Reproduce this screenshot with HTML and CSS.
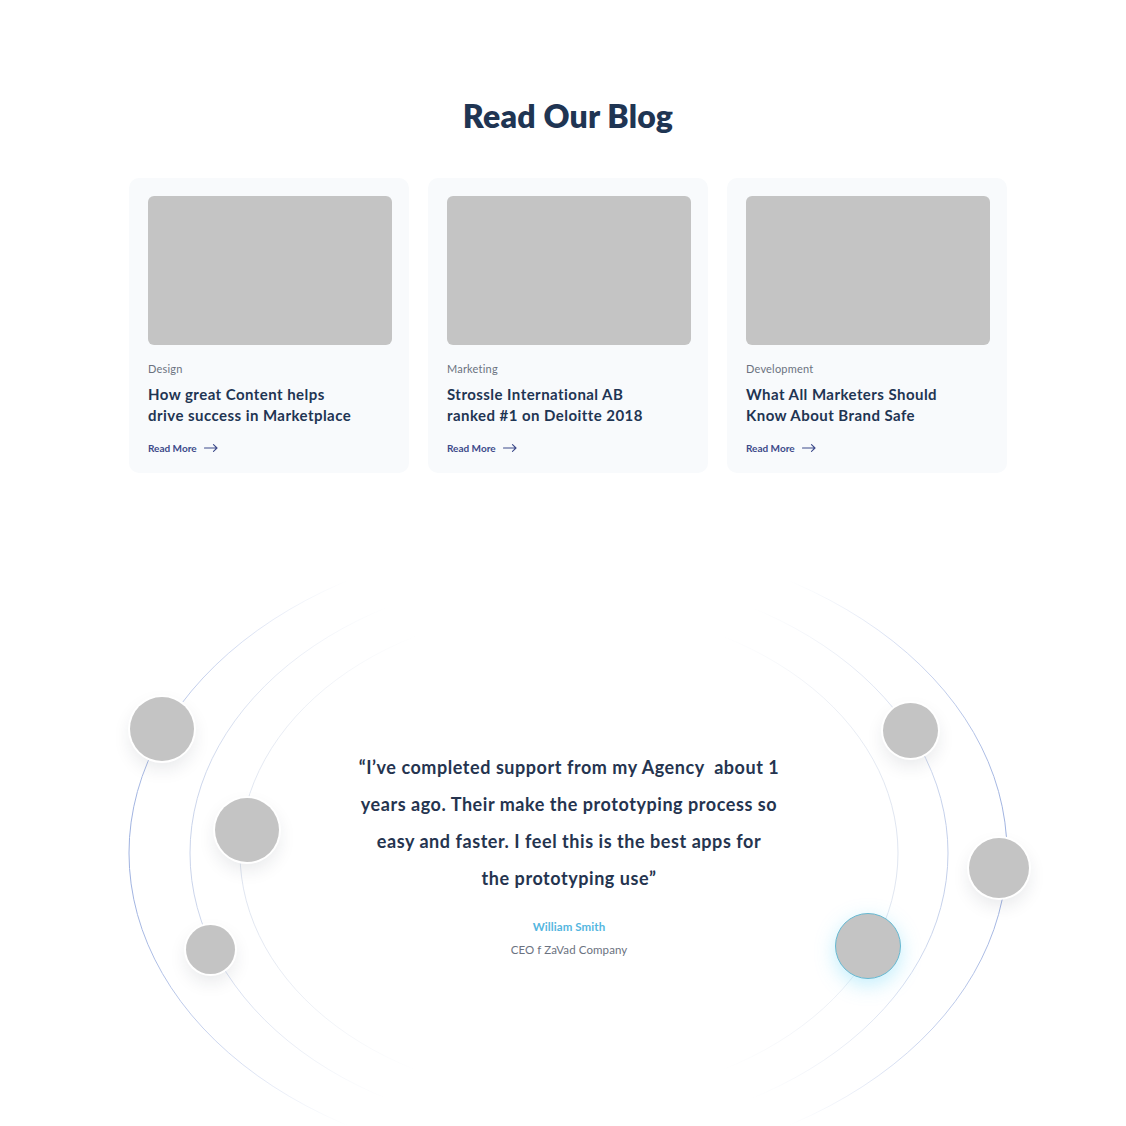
FILE: index.html
```html
<!DOCTYPE html>
<html lang="en">
<head>
<meta charset="utf-8">
<title>Read Our Blog</title>
<link rel="stylesheet" href="styles.css">
</head>
<body>
<section class="blog">
  <h2 class="blog-title">Read Our Blog</h2>
  <div class="cards">
    <article class="card">
      <div class="thumb"></div>
      <div class="cat">Design</div>
      <h3 class="card-title">How great Content helps<br>drive success in Marketplace</h3>
      <a class="more" href="#">Read More <svg class="arrow" width="14" height="8" viewBox="0 0 14 8"><path d="M0.5 4H13M9.5 0.7L13 4L9.5 7.3" fill="none" stroke="currentColor" stroke-width="1.1" stroke-linecap="round" stroke-linejoin="round"/></svg></a>
    </article>
    <article class="card">
      <div class="thumb"></div>
      <div class="cat">Marketing</div>
      <h3 class="card-title">Strossle International AB<br>ranked #1 on Deloitte 2018</h3>
      <a class="more" href="#">Read More <svg class="arrow" width="14" height="8" viewBox="0 0 14 8"><path d="M0.5 4H13M9.5 0.7L13 4L9.5 7.3" fill="none" stroke="currentColor" stroke-width="1.1" stroke-linecap="round" stroke-linejoin="round"/></svg></a>
    </article>
    <article class="card">
      <div class="thumb"></div>
      <div class="cat">Development</div>
      <h3 class="card-title">What All Marketers Should<br>Know About Brand Safe</h3>
      <a class="more" href="#">Read More <svg class="arrow" width="14" height="8" viewBox="0 0 14 8"><path d="M0.5 4H13M9.5 0.7L13 4L9.5 7.3" fill="none" stroke="currentColor" stroke-width="1.1" stroke-linecap="round" stroke-linejoin="round"/></svg></a>
    </article>
  </div>
</section>

<section class="testimonial">
  <svg class="orbits" width="1126" height="606" viewBox="0 0 1126 606">
    <defs>
      <linearGradient id="gOuter" x1="0" y1="0" x2="1" y2="0">
        <stop offset="0" stop-color="#9fb2e0" stop-opacity="1"/>
        <stop offset="0.12" stop-color="#b7c5e8" stop-opacity="0.6"/>
        <stop offset="0.25" stop-color="#d6deef" stop-opacity="0"/>
        <stop offset="0.75" stop-color="#d6deef" stop-opacity="0"/>
        <stop offset="0.88" stop-color="#b7c5e8" stop-opacity="0.6"/>
        <stop offset="1" stop-color="#9fb2e0" stop-opacity="1"/>
      </linearGradient>
      <linearGradient id="gMid" x1="0" y1="0" x2="1" y2="0">
        <stop offset="0" stop-color="#c9d3ea" stop-opacity="1"/>
        <stop offset="0.13" stop-color="#d9e0ef" stop-opacity="0.6"/>
        <stop offset="0.26" stop-color="#e6ebf4" stop-opacity="0"/>
        <stop offset="0.74" stop-color="#e6ebf4" stop-opacity="0"/>
        <stop offset="0.87" stop-color="#d9e0ef" stop-opacity="0.6"/>
        <stop offset="1" stop-color="#c3cfea" stop-opacity="1"/>
      </linearGradient>
      <linearGradient id="gInner" x1="0" y1="0" x2="1" y2="0">
        <stop offset="0" stop-color="#dfe5f0" stop-opacity="1"/>
        <stop offset="0.13" stop-color="#e6eaf2" stop-opacity="0.6"/>
        <stop offset="0.27" stop-color="#eef1f6" stop-opacity="0"/>
        <stop offset="0.73" stop-color="#eef1f6" stop-opacity="0"/>
        <stop offset="0.87" stop-color="#e6eaf2" stop-opacity="0.6"/>
        <stop offset="1" stop-color="#dfe5f0" stop-opacity="1"/>
      </linearGradient>
    </defs>
    <ellipse cx="568" cy="333" rx="439" ry="315" fill="none" stroke="url(#gOuter)" stroke-width="1"/>
    <ellipse cx="569" cy="333" rx="379" ry="280" fill="none" stroke="url(#gMid)" stroke-width="1"/>
    <ellipse cx="569" cy="333" rx="329" ry="245" fill="none" stroke="url(#gInner)" stroke-width="1"/>
  </svg>

  <div class="avatar a1"></div>
  <div class="avatar a2"></div>
  <div class="avatar a3"></div>
  <div class="avatar a4"></div>
  <div class="avatar a5"></div>
  <div class="avatar a6 active"></div>

  <div class="quote-block">
    <p class="quote">“I’ve completed support from my Agency&nbsp; about 1<br>years ago. Their make the prototyping process so<br>easy and faster. I feel this is the best apps for<br>the prototyping use”</p>
    <div class="author">William Smith</div>
    <div class="role">CEO f ZaVad Company</div>
  </div>
</section>
</body>
</html>
```

FILE: styles.css
```css
* { box-sizing: border-box; }

html, body {
  margin: 0;
  padding: 0;
  background: #ffffff;
}

body {
  font-family: "Lato", "Inter", "Liberation Sans", sans-serif;
  color: #1f3452;
  overflow: hidden;
  height: 1126px;
}

.blog {
  padding-top: 98px;
  padding-left: 10px;
  display: flex;
  flex-direction: column;
  align-items: center;
}

.blog-title {
  margin: 0;
  font-size: 32px;
  line-height: 36px;
  font-weight: 800;
  color: #1f3553;
  letter-spacing: 0.2px;
}

.cards {
  margin-top: 44px;
  display: flex;
  gap: 19px;
}

.card {
  width: 280px;
  height: 295px;
  background: #f8fafc;
  border-radius: 10px;
  padding: 18px 19px 18px 19px;
  display: flex;
  flex-direction: column;
  align-items: flex-start;
}

.thumb {
  width: 244px;
  height: 149px;
  background: #c4c4c4;
  border-radius: 6px;
}

.cat {
  margin-top: 17px;
  font-size: 11px;
  line-height: 14px;
  color: #6b7280;
  letter-spacing: 0.2px;
}

.card-title {
  margin: 8px 0 0;
  font-size: 15px;
  line-height: 21px;
  font-weight: 700;
  color: #1f3553;
  letter-spacing: 0.45px;
}

.more {
  margin-top: 15px;
  display: flex;
  align-items: center;
  gap: 7px;
  font-size: 10px;
  line-height: 14px;
  font-weight: 700;
  color: #3d4a8a;
  text-decoration: none;
}

.arrow { display: block; }

.testimonial {
  position: relative;
  margin-top: 47px;
  height: 606px;
  overflow: hidden;
}

.orbits {
  position: absolute;
  left: 0;
  top: 0;
}

.avatar {
  position: absolute;
  border-radius: 50%;
  background: #c4c4c4;
  box-shadow: 0 0 0 2px #ffffff, 0 8px 18px rgba(30, 40, 60, 0.10);
}

.a1 { left: 130px; top: 177px; width: 64px; height: 64px; }
.a2 { left: 215px; top: 278px; width: 64px; height: 64px; }
.a3 { left: 186px; top: 405px; width: 49px; height: 49px; }
.a4 { left: 883px; top: 183px; width: 55px; height: 55px; }
.a5 { left: 969px; top: 318px; width: 60px; height: 60px; }
.a6 { left: 835px; top: 393px; width: 66px; height: 66px; }

.avatar.active {
  border: 1px solid #67b9d2;
  box-shadow: 0 6px 20px rgba(80, 205, 245, 0.35);
}

.quote-block {
  position: relative;
  padding-top: 229px;
  padding-left: 12px;
  display: flex;
  flex-direction: column;
  align-items: center;
  text-align: center;
}

.quote {
  margin: 0;
  font-size: 18px;
  line-height: 37px;
  font-weight: 700;
  color: #25344f;
  letter-spacing: 0.55px;
}

.author {
  margin-top: 22px;
  font-size: 11.5px;
  line-height: 16px;
  font-weight: 700;
  color: #54b6e0;
  letter-spacing: 0.1px;
}

.role {
  margin-top: 7px;
  font-size: 11.5px;
  line-height: 16px;
  color: #6b7280;
  letter-spacing: 0.1px;
}
```
